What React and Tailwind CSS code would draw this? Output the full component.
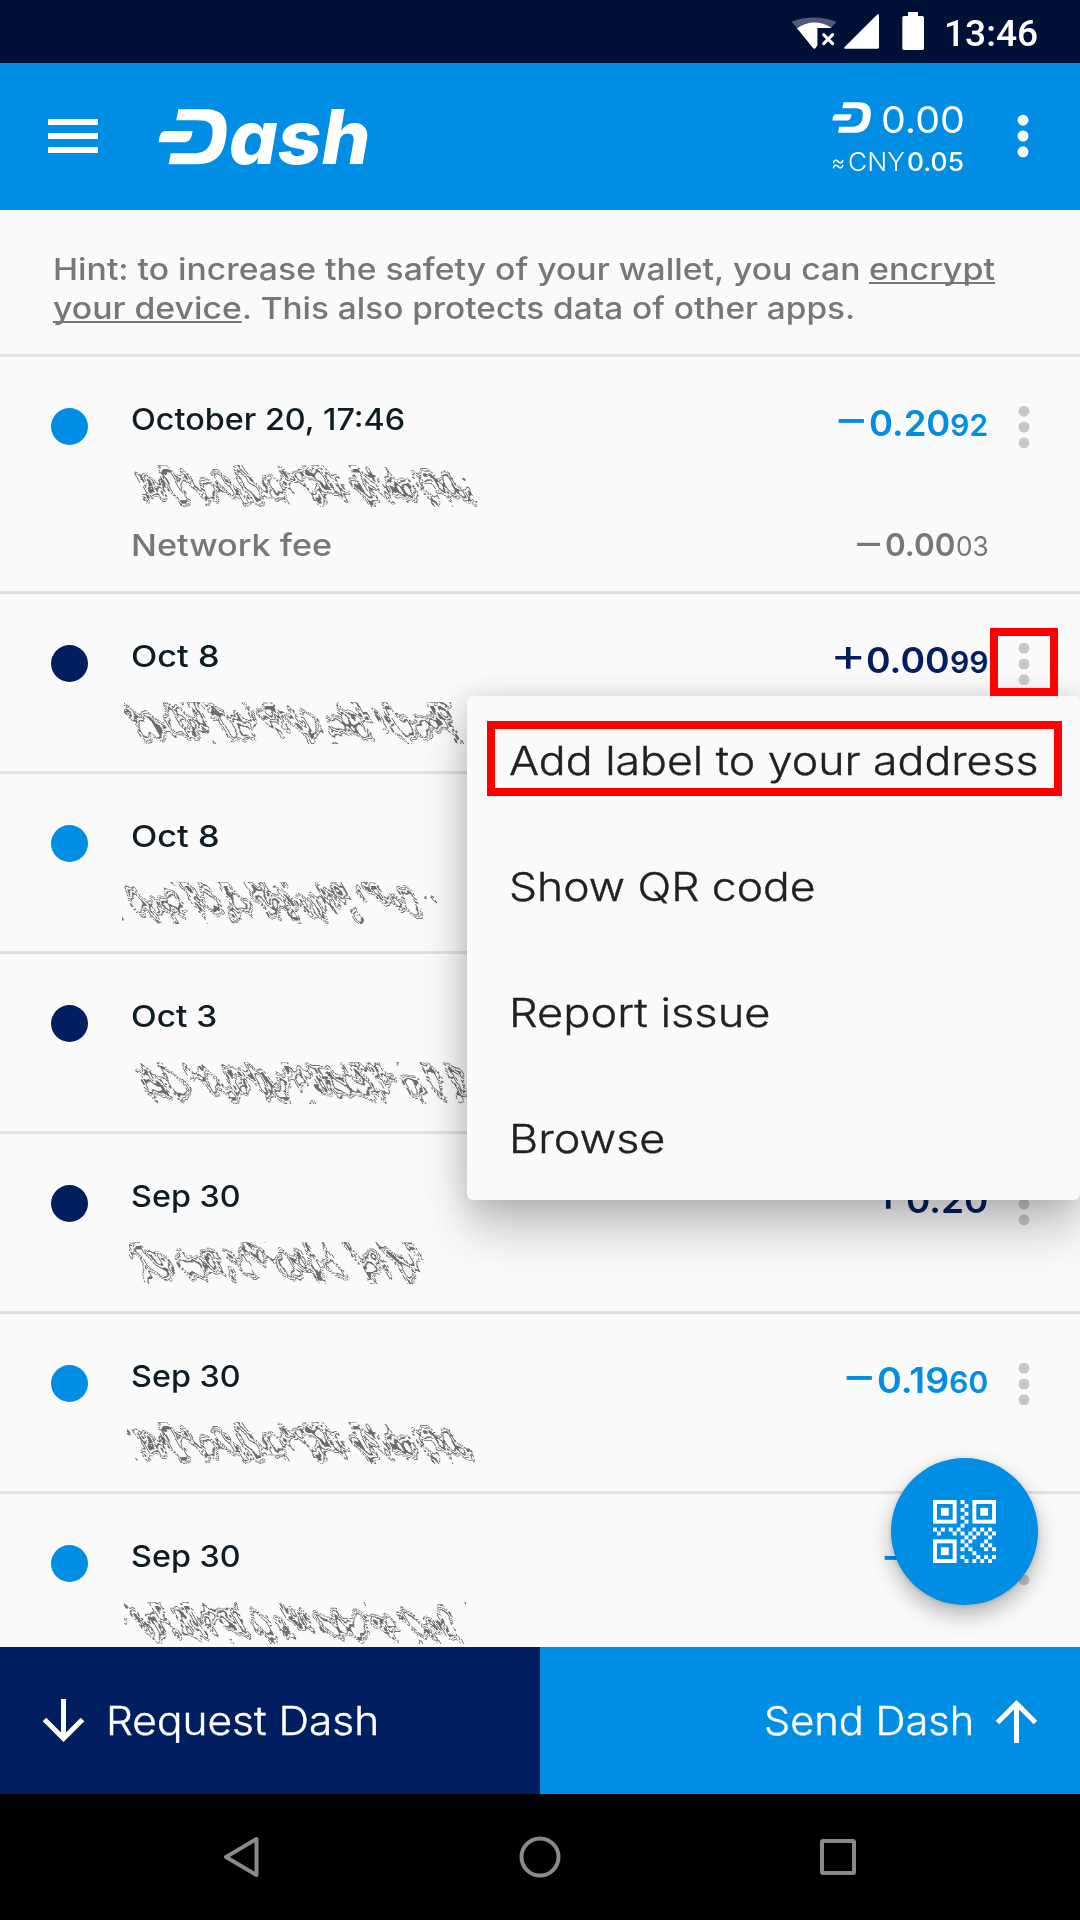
import { useLayoutEffect, useRef, useState } from "react";

/* Single line of text whose glyphs are stretched to an exact advance width. */
function Fit({ w, className = "", underline = false, children }) {
  const ref = useRef(null);
  const [scale, setScale] = useState(1);
  useLayoutEffect(() => {
    const measure = () => {
      if (ref.current) setScale(w / ref.current.offsetWidth);
    };
    measure();
    document.fonts?.ready.then(measure);
  }, [w, children]);
  return (
    <span className={"inline-block whitespace-nowrap " + className} style={{ width: w }}>
      <span
        ref={ref}
        className={
          "inline-block origin-left " +
          (underline ? "underline decoration-2 underline-offset-[2px] [text-decoration-skip-ink:none]" : "")
        }
        style={{ transform: `scaleX(${scale})` }}
      >
        {children}
      </span>
    </span>
  );
}

function DashMark({ className }) {
  return (
    <svg className={className} viewBox="460 326 200 167" preserveAspectRatio="none" fill="currentColor">
      <path d="M519 327H598C642 327 659 350 659 385C657 452 638 492 573 492H491L497 459H565C604 459 618 432 618 392C618 369 606 360 572 360H513Z" />
      <path d="M482 392H560C557 416 552 426 531 426H462C464 404 468 392 482 392Z" />
    </svg>
  );
}

function Kebab({ className }) {
  return (
    <svg className={className} viewBox="0 0 32 48" fill="currentColor">
      <circle cx="16" cy="8.2" r="5.5" />
      <circle cx="16" cy="24" r="5.5" />
      <circle cx="16" cy="39.8" r="5.5" />
    </svg>
  );
}

/* Scrambled address: slanted contour lines of noise, held to a soft-edged band. */
function Scribble({ id, seed, x, w, gap }) {
  return (
    <svg className="block h-[60px] w-[400px] overflow-visible" viewBox="0 0 400 60">
      <defs>
        <clipPath id={id + "-clip"}>
          <rect x={x - 2} y="9" width={w + 6} height="42" />
        </clipPath>
        <filter id={id} filterUnits="userSpaceOnUse" x="-30" y="0" width="450" height="60" colorInterpolationFilters="sRGB">
          <feTurbulence type="fractalNoise" baseFrequency="0.08 0.04" numOctaves="2" seed={seed} result="n" />
          <feColorMatrix in="n" type="matrix" values="0 0 0 0 0  0 0 0 0 0  0 0 0 0 0  2.3 0 0 0 -0.65" result="na" />
          <feGaussianBlur in="SourceGraphic" stdDeviation="5 8" result="band" />
          <feComposite in="na" in2="band" operator="arithmetic" k1="0" k2="0.66" k3="0.46" k4="-0.14" result="sum" />
          <feComponentTransfer in="sum" result="lines">
            <feFuncA
              type="discrete"
              tableValues="0 0 0 0 0 0 0 0 0 0 0 0 0 0 0 0 0 0 0 0 0 0 0 0 0 1 1 0 0 0 1 1 0 0 0 0 1 1 1 1 0 0 0 0 0 0 0 0 0 0"
            />
          </feComponentTransfer>
          <feFlood floodColor="#6c6c6c" />
          <feComposite in2="lines" operator="in" />
        </filter>
      </defs>
      <g clipPath={`url(#${id}-clip)`}>
        <g transform="translate(-17 0) skewX(30)">
          <g filter={`url(#${id})`}>
            <g transform={`translate(${x} 0)`}>
              <rect x="4" y="14" width={gap ? gap - 4 : w - 8} height="32" fill="#000" />
              {gap ? <rect x={gap + 12} y="14" width={w - gap - 16} height="32" fill="#000" /> : null}
            </g>
          </g>
        </g>
      </g>
    </svg>
  );
}

function Amount({ sign, big, small, bigW, smallW }) {
  return (
    <div className="mr-[1px] flex h-[36px] items-baseline text-[36px] leading-[36px] font-semibold">
      <Fit w={36} className="relative top-[-2px] text-[46px] leading-[36px] font-normal">{sign}</Fit>
      <Fit w={bigW}>{big}</Fit>
      {small ? <Fit w={smallW} className="text-[30px]">{small}</Fit> : null}
    </div>
  );
}

const rows = [
  { date: "October 20, 17:46", dateW: 274, out: true, big: "0.20", small: "92", bigW: 81, smallW: 38, seed: 4, x: 2, w: 342, fee: true },
  { date: "Oct 8", dateW: 88, out: false, big: "0.00", small: "99", bigW: 84, smallW: 38, seed: 11, x: -5, w: 334, marked: true },
  { date: "Oct 8", dateW: 88, out: true, seed: 23, x: -7, w: 312, gap: 228 },
  { date: "Oct 3", dateW: 86, out: false, seed: 31, x: -6, w: 348 },
  { date: "Sep 30", dateW: 110, out: false, big: "0.20", bigW: 82, seed: 42, x: 0, w: 296, gap: 210 },
  { date: "Sep 30", dateW: 110, out: true, big: "0.19", small: "60", bigW: 72, smallW: 39, seed: 4, x: -2, w: 342 },
  { date: "Sep 30", dateW: 110, out: true, big: "0.10", bigW: 73, seed: 57, x: -5, w: 336 },
];

function Row({ r, i }) {
  return (
    <div
      className={
        "flex shrink-0 items-start border-b-[3px] border-[#e0e0e0] pl-[51px] " + (r.fee ? "h-[237px]" : "h-[180px]")
      }
    >
      <div className={"mt-[51px] size-[37px] rounded-full " + (r.out ? "bg-[#008de4]" : "bg-[#011f60]")} />
      <div className="ml-[43px] w-[858px] pt-[44px] text-[30px] leading-[36px]">
        <div className="flex h-[36px] items-start justify-between">
          <Fit w={r.dateW} className="font-medium text-[#101c24]">{r.date}</Fit>
          {r.big ? (
            <div className={r.out ? "text-[#008de4]" : "text-[#011f60]"}>
              <Amount sign={r.out ? "−" : "+"} big={r.big} small={r.small} bigW={r.bigW} smallW={r.smallW} />
            </div>
          ) : null}
        </div>
        <div className="mt-[19px]">
          <Scribble id={"scramble" + i} seed={r.seed} x={r.x} w={r.w} gap={r.gap} />
        </div>
        {r.fee ? (
          <div className="mt-[8px] flex items-baseline justify-between text-[#777777]">
            <Fit w={201} className="font-medium">Network fee</Fit>
            <div className="flex items-baseline">
              <Fit w={33} className="relative top-[-1px] text-[38px] leading-[36px]">−</Fit>
              <Fit w={71} className="text-[31px] font-semibold">0.00</Fit>
              <Fit w={33} className="text-[27px]">03</Fit>
            </div>
          </div>
        ) : null}
      </div>
      <div
        className={
          r.marked
            ? "relative z-20 mt-[34px] ml-[1px] flex h-[68px] w-[68px] justify-center border-8 border-[#ff0000] pt-[3.5px]"
            : "mt-[45.5px] ml-[1px] flex w-[68px] justify-center"
        }
      >
        <Kebab className="h-[48px] w-[32px] shrink-0 text-[#c8c8c8]" />
      </div>
    </div>
  );
}

/* Data modules of the QR glyph as [column, row]. */
const qrDots = [
  [7, 0], [8, 1], [7, 2], [8, 3], [7, 4], [8, 5], [7, 6],
  [0, 7], [2, 7], [4, 7], [6, 7], [10, 7], [12, 7], [14, 7],
  [1, 8], [5, 8], [7, 8], [9, 8], [11, 8], [13, 8], [15, 8],
  [8, 9], [10, 9], [14, 9],
  [7, 10], [9, 10], [13, 10],
  [8, 11], [12, 11], [14, 11],
  [7, 12], [9, 12], [13, 12], [15, 12],
  [10, 13],
  [7, 14], [11, 14], [13, 14], [15, 14],
  [8, 15], [10, 15], [12, 15], [14, 15],
];

function QrIcon() {
  return (
    <svg className="size-[63px]" viewBox="0 0 16 16" fill="#fff">
      {[[0, 0], [10, 0], [0, 10]].map(([x, y]) => (
        <g key={x + "-" + y}>
          <rect x={x + 0.5} y={y + 0.5} width="5" height="5" fill="none" stroke="#fff" />
          <rect x={x + 2} y={y + 2} width="2" height="2" />
        </g>
      ))}
      {qrDots.map(([x, y]) => (
        <rect key={x + "-" + y} x={x} y={y} width="1" height="1" />
      ))}
    </svg>
  );
}

function StatusIcons() {
  return (
    <svg className="h-[50px] w-[145px]" viewBox="0 0 435 150">
      <path d="M20 50Q87 25 154 50L138 69L88 131Z" fill="#4f5a7b" />
      <path d="M97 69H160V131H97Z" fill="#001137" />
      <path d="M36 70Q87 36 140 69H97V121L92 129Q88 133 84 129Z" fill="#fff" />
      <path d="M116 89L143 116M143 89L116 116" stroke="#fff" strokeWidth="9" strokeLinecap="round" />
      <path d="M276 29Q282 24 282 32V127Q282 131 278 131H181Q175 131 179 126Z" fill="#fff" />
      <rect x="352" y="33" width="65" height="102" rx="5" fill="#fff" />
      <rect x="369" y="21" width="30" height="16" fill="#fff" />
    </svg>
  );
}

const menu = [
  { label: "Add label to your address", w: 530 },
  { label: "Show QR code", w: 307 },
  { label: "Report issue", w: 261 },
  { label: "Browse", w: 156 },
];

export default function App() {
  return (
    <div className="relative flex h-[1920px] w-[1080px] flex-col overflow-hidden bg-[#fafafa] font-['Inter','Liberation_Sans',sans-serif]">
      <div className="flex h-[63px] shrink-0 items-start bg-[#001137] pl-[785px]">
        <div className="pt-[5px]">
          <StatusIcons />
        </div>
        <Fit w={94} className="ml-[14px] pt-[11px] font-['Roboto',sans-serif] text-[37.5px] leading-[44px] font-medium text-white">
          13:46
        </Fit>
      </div>

      <header className="flex h-[147px] shrink-0 items-start bg-[#008de4] text-white">
        <div className="mt-[56px] ml-[48px] flex w-[50px] flex-col gap-[8.7px]">
          <div className="h-[5.5px] bg-white" />
          <div className="h-[5.5px] bg-white" />
          <div className="h-[5.5px] bg-white" />
        </div>
        <DashMark className="mt-[46px] ml-[60px] h-[55.5px] w-[69px]" />
        <Fit w={141} className="ml-[2px] pt-[33px] text-[75px] leading-[82px] font-extrabold italic">
          ash
        </Fit>
        <div className="ml-auto w-[133px] pt-[32px]">
          <div className="flex h-[46px] items-start">
            <DashMark className="mt-[7px] h-[31px] w-[39px]" />
            <Fit w={84} className="ml-[10px] pt-[2px] text-[37px] leading-[46px]">0.00</Fit>
          </div>
          <div className="mt-[3px] flex items-baseline text-[25px] leading-[36px]">
            <Fit w={14} className="mr-[3px] ml-[-1px] font-light">≈</Fit>
            <Fit w={57} className="mr-[1px] font-light">CNY</Fit>
            <Fit w={57} className="ml-[1px] font-medium">0.05</Fit>
          </div>
        </div>
        <Kebab className="mt-[48.5px] mr-[41.5px] ml-[41.5px] h-[48px] w-[32px]" />
      </header>

      <main className="flex h-[1437px] shrink-0 flex-col overflow-hidden">
        <div className="h-[147px] shrink-0 border-b-[3px] border-[#e0e0e0] pt-[40px] pl-[53px] text-[30px] leading-[39px] font-medium text-[#777777]">
          <div className="flex">
            <Fit w={816}>Hint: to increase the safety of your wallet, you can{"\u00a0"}</Fit>
            <Fit w={126} underline>encrypt</Fit>
          </div>
          <div className="flex">
            <Fit w={189} underline>your device</Fit>
            <Fit w={613}>. This also protects data of other apps.</Fit>
          </div>
        </div>
        {rows.map((r, i) => (
          <Row key={i} r={r} i={i} />
        ))}
      </main>

      <div className="flex h-[147px] shrink-0 text-[39px] leading-[48px] font-light text-white [-webkit-text-stroke:0.4px_#fff]">
        <div className="flex w-[540px] items-center bg-[#011f60] pl-[42px]">
          <svg className="h-[44px] w-[43px]" viewBox="0 0 43 44" fill="none" stroke="#fff" strokeWidth="5">
            <path d="M21.5 0V39M2.5 20.5L21.5 39.5L40.5 20.5" />
          </svg>
          <Fit w={273} className="ml-[21px] pt-[1px]">Request Dash</Fit>
        </div>
        <div className="flex w-[540px] items-center justify-end bg-[#008de4] pr-[42px]">
          <Fit w={210} className="mr-[21px] pt-[1px]">Send Dash</Fit>
          <svg className="h-[44px] w-[43px]" viewBox="0 0 43 44" fill="none" stroke="#fff" strokeWidth="5">
            <path d="M21.5 44V5M2.5 23.5L21.5 4.5L40.5 23.5" />
          </svg>
        </div>
      </div>

      <nav className="flex h-[126px] shrink-0 items-center justify-between bg-black pr-[223px] pl-[222px] text-[#8a8a8a]">
        <svg className="size-[42px]" viewBox="0 0 42 42" fill="none" stroke="currentColor" strokeWidth="4" strokeLinejoin="round">
          <path d="M34.5 3V39L4 21Z" />
        </svg>
        <svg className="size-[42px] overflow-visible" viewBox="0 0 42 42" fill="none" stroke="currentColor" strokeWidth="4">
          <circle cx="19" cy="21" r="18.5" />
        </svg>
        <svg className="size-[38px]" viewBox="0 0 38 38" fill="none" stroke="currentColor" strokeWidth="4">
          <rect x="3" y="3" width="32" height="32" rx="1" />
        </svg>
      </nav>

      <div className="absolute top-[696px] left-[467px] z-10 h-[504px] w-[613px] rounded-[6px] bg-[#fafafa] shadow-[0_28px_48px_rgba(0,0,0,0.24),0_0_28px_rgba(0,0,0,0.13)]">
        {menu.map((m, i) => (
          <div
            key={m.label}
            className={
              i === 0
                ? "mt-[25px] mb-[51px] ml-[20px] flex h-[75px] w-[575px] items-center border-8 border-[#ff0000] pl-[14px]"
                : "mb-[51px] flex h-[75px] items-center pl-[42px]"
            }
          >
            <Fit w={m.w} className="pt-[4px] text-[39.5px] leading-[48px] font-light text-[#212121] [-webkit-text-stroke:0.4px_#212121]">
              {m.label}
            </Fit>
          </div>
        ))}
      </div>

      <div className="absolute top-[1458px] left-[891px] flex size-[147px] items-center justify-center rounded-full bg-[#008de4] shadow-[0_10px_22px_rgba(0,0,0,0.28),0_1px_4px_rgba(0,0,0,0.15)]">
        <QrIcon />
      </div>
    </div>
  );
}
